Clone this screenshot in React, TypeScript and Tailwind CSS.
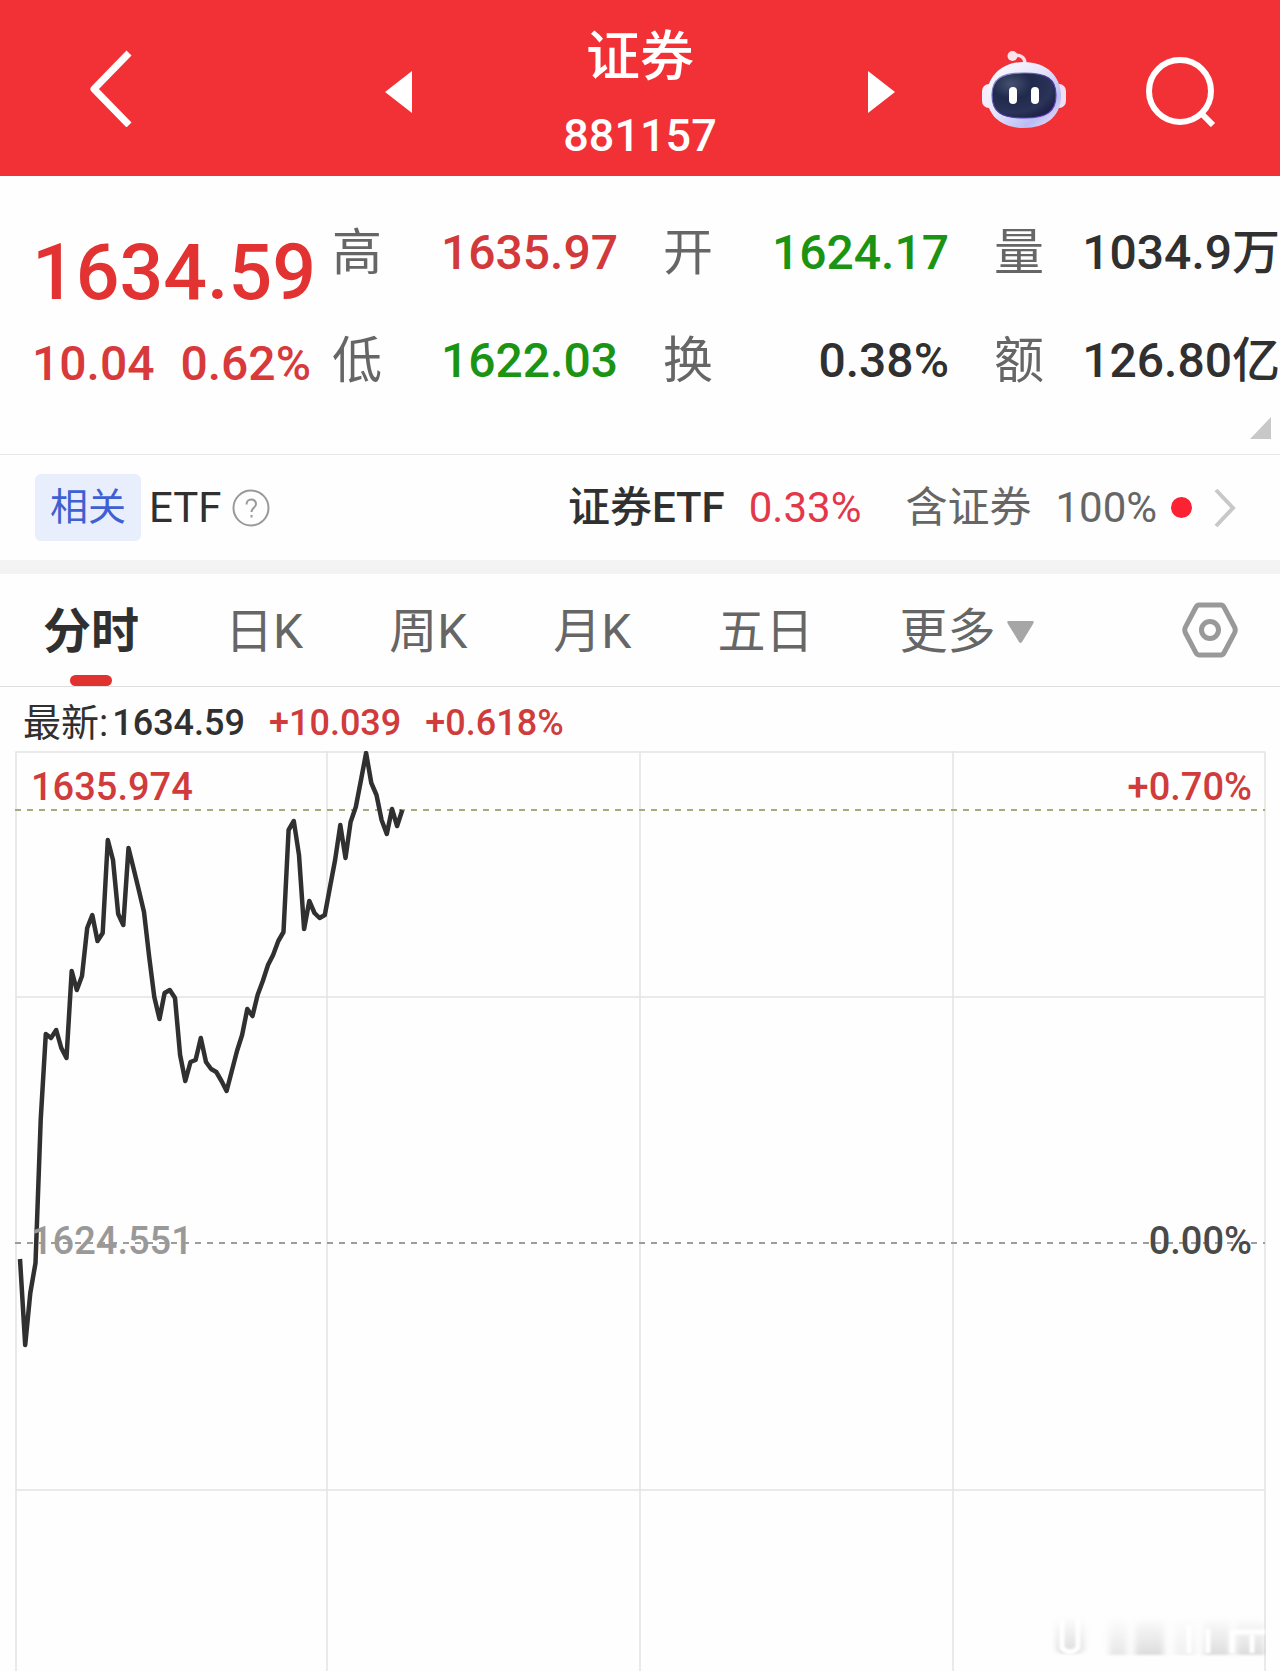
import { useState } from "react";

const stats = [
  { label: "高", value: "1635.97", color: "text-[#d3393a]" },
  { label: "开", value: "1624.17", color: "text-[#1b9413]" },
  { label: "量", value: "1034.9万", color: "text-[#303030]" },
  { label: "低", value: "1622.03", color: "text-[#1b9413]" },
  { label: "换", value: "0.38%", color: "text-[#303030]" },
  { label: "额", value: "126.80亿", color: "text-[#303030]" },
];

const tabs = ["分时", "日K", "周K", "月K", "五日", "更多"];

// one value per minute, measured down from the top of the chart
const series = [
  508, 594, 542, 512, 369, 283, 287, 279, 297, 307, 220, 239, 225, 177, 164,
  190, 182, 89, 109, 163, 174, 97, 118, 139, 161, 206, 246, 268, 242, 239,
  247, 304, 330, 311, 309, 287, 311, 318, 321, 330, 340, 320, 300, 284, 258,
  265, 244, 230, 214, 204, 190, 181, 79, 70, 104, 178, 150, 162, 167, 164,
  136, 109, 74, 107, 71, 56, 29, 2, 32, 44, 69, 83, 58, 75, 59,
];
const STEP = 5.166;
const points = series.map((y, i) => `${(5 + i * STEP).toFixed(1)},${y}`).join(" ");

const RobotIcon = () => (
  <svg viewBox="0 0 84 78" className="h-[78px] w-[84px]" aria-hidden="true">
    <defs>
      <linearGradient id="head" x1="0" y1="0" x2="1" y2="1">
        <stop offset="0" stopColor="#ffffff" />
        <stop offset="0.45" stopColor="#e6e4fb" />
        <stop offset="0.75" stopColor="#b9bdf5" />
        <stop offset="1" stopColor="#f6e6f6" />
      </linearGradient>
      <linearGradient id="rim" x1="0" y1="0" x2="1" y2="1">
        <stop offset="0" stopColor="#9aa0d8" />
        <stop offset="0.5" stopColor="#4a35a0" />
        <stop offset="1" stopColor="#7a3fd0" />
      </linearGradient>
      <radialGradient id="face" cx="0.3" cy="0.25" r="0.8">
        <stop offset="0" stopColor="#46506f" />
        <stop offset="0.4" stopColor="#202a4c" />
        <stop offset="0.8" stopColor="#2b3358" />
        <stop offset="1" stopColor="#1d2248" />
      </radialGradient>
    </defs>
    <path d="M31 5 C38 3 43 6 43 13" fill="none" stroke="#f9dfe8" strokeWidth="3.5" />
    <circle cx="30.5" cy="5" r="5" fill="#fbe3ea" />
    <rect x="0" y="33" width="14" height="24" rx="7" fill="#f4ecfb" />
    <rect x="70" y="33" width="14" height="24" rx="7" fill="#f1dff2" />
    <path d="M42 11 C64 11 79 25 79 45 C79 66 63 77 42 77 C21 77 5 66 5 45 C5 25 20 11 42 11Z" fill="url(#head)" />
    <path d="M42 22 C65 22 74 28 74 44 C74 61 65 67 42 67 C19 67 10 61 10 44 C10 28 19 22 42 22Z" fill="url(#face)" stroke="url(#rim)" strokeWidth="1.2" />
    <rect x="27" y="36" width="8" height="17" rx="4" fill="#fff" />
    <rect x="49" y="36" width="8" height="17" rx="4" fill="#fff" />
  </svg>
);

const Header = () => (
  <header className="grid grid-cols-[1fr_510px_1fr] bg-[#f23137] text-white">
    <div className="flex items-center pl-[88px]">
      <button aria-label="返回">
        <svg viewBox="0 0 44 78" className="h-[78px] w-11" fill="none" stroke="currentColor" strokeWidth="7">
          <path d="M41 4 L6 40 L41 76" strokeLinejoin="round" />
        </svg>
      </button>
    </div>
    <div className="flex items-center justify-between">
      <button aria-label="上一个" className="pt-2">
        <svg viewBox="0 0 27 42" className="h-[42px] w-[27px]" fill="currentColor">
          <path d="M27 0 V42 L0 21Z" />
        </svg>
      </button>
      <div className="flex flex-col items-center gap-3.5 pt-6 pb-2.5">
        <h1 className="text-[54px] leading-[68px] font-medium">证券</h1>
        <p className="text-[45px] leading-[60px] font-medium">881157</p>
      </div>
      <button aria-label="下一个" className="pt-2">
        <svg viewBox="0 0 27 42" className="h-[42px] w-[27px]" fill="currentColor">
          <path d="M0 0 V42 L27 21Z" />
        </svg>
      </button>
    </div>
    <div className="flex items-center justify-end gap-20 pt-[3px] pr-16">
      <button aria-label="智能助手">
        <RobotIcon />
      </button>
      <button aria-label="搜索" className="pt-1">
        <svg viewBox="0 0 70 70" className="size-[70px]" fill="none" stroke="currentColor" strokeWidth="6">
          <circle cx="34" cy="34" r="31" />
          <path d="M55 56 L67 68" />
        </svg>
      </button>
    </div>
  </header>
);

const Quote = () => (
  <section className="border-b border-[#e8e8e8]">
    <div className="flex">
      <div className="w-[332px] shrink-0 pt-[53px] pl-8 font-medium text-[#d8393a]">
        <p className="text-[77px] leading-[88px] text-[#e23232]">1634.59</p>
        <p className="flex gap-[26px] pt-[11px] text-[48px] leading-[72px]">
          <span>10.04</span>
          <span>0.62%</span>
        </p>
      </div>
      <dl className="grid flex-1 grid-cols-3 content-start gap-x-[45px] gap-y-9 pt-[41px] leading-[72px]">
        {stats.map((s) => (
          <div key={s.label} className="flex items-center justify-between whitespace-nowrap">
            <dt className="text-[50px] text-[#666]">{s.label}</dt>
            <dd className={`text-[48px] font-medium ${s.color}`}>{s.value}</dd>
          </div>
        ))}
      </dl>
    </div>
    <div className="flex justify-end pt-[17px] pr-[9px] pb-[15px]">
      <button aria-label="展开">
        <svg viewBox="0 0 21 22" className="h-[22px] w-[21px]" fill="#c8c8c8">
          <path d="M21 0 V22 H0Z" />
        </svg>
      </button>
    </div>
  </section>
);

const EtfBar = () => (
  <section className="flex items-center justify-between border-b-[14px] border-[#f3f3f3] py-[19px] pr-11 pl-[35px] text-[42px] leading-[67px]">
    <div className="flex items-center">
      <span className="rounded-md bg-[#e9eefd] px-[15px] text-[38px] text-[#3f60d2]">相关</span>
      <span className="pl-2 text-[#303030]">ETF</span>
      <button aria-label="说明" className="ml-2.5">
        <svg viewBox="0 0 38 38" className="size-[38px]" fill="none" stroke="#999" strokeWidth="2">
          <circle cx="19" cy="19" r="17.500" />
          <path d="M14.500 15.500 C14.500 9 24 9 24 15 C24 19 19.500 18.500 19.500 23" />
          <path d="M19.500 26 V28.500" />
        </svg>
      </button>
    </div>
    <a href="#" className="flex items-center whitespace-nowrap">
      <span className="font-medium text-[#303030]">证券ETF</span>
      <span className="pl-6 text-[#e3384a]">0.33%</span>
      <span className="pl-11 text-[#666]">含证券</span>
      <span className="pl-6 text-[#666]">100%</span>
      <span className="ml-3.5 size-[21px] rounded-full bg-[#fb2233]" />
      <svg viewBox="0 0 22 40" className="ml-[22px] h-10 w-[22px]" fill="none" stroke="#c8c8c8" strokeWidth="4">
        <path d="M2 2 L19 20 L2 38" />
      </svg>
    </a>
  </section>
);

const Tabs = () => {
  const [active, setActive] = useState("分时");

  return (
    <nav className="flex items-start justify-between border-b border-[#dedede] pr-[42px] pl-[43px]">
      <div className="flex gap-[86px] text-[48px] leading-[72px]">
        {tabs.map((tab) => (
          <button
            key={tab}
            onClick={() => setActive(tab)}
            className={`flex flex-col items-center pt-[22px] ${active === tab ? "font-bold text-[#303030]" : "text-[#666]"}`}
          >
            <span className="flex items-center gap-3">
              {tab}
              {tab === "更多" && (
                <svg viewBox="0 0 27 22" className="h-[22px] w-[27px]" fill="#a6a6a6">
                  <path d="M2 0 H25 Q28 0 26 3 L15 21 Q13.500 23 12 21 L1 3 Q-1 0 2 0Z" />
                </svg>
              )}
            </span>
            <span className={`mt-[7px] h-[11px] w-[42px] rounded-full ${active === tab ? "bg-[#e0322f]" : ""}`} />
          </button>
        ))}
      </div>
      <button aria-label="设置" className="pt-7">
        <svg viewBox="0 0 56 56" className="size-14" fill="none" stroke="#999" strokeWidth="5">
          <path d="M17 3 H39 Q41 3 42.500 6 L52.500 25 Q54 28 52.500 31 L42.500 50 Q41 53 39 53 H17 Q15 53 13.500 50 L3.500 31 Q2 28 3.500 25 L13.500 6 Q15 3 17 3Z" />
          <circle cx="28" cy="28" r="8.500" />
        </svg>
      </button>
    </nav>
  );
};

const Watermark = () => (
  <svg viewBox="0 0 214 44" className="absolute right-0 bottom-3 h-11 w-[214px]" aria-hidden="true">
    <defs>
      <linearGradient id="fade" x1="0" y1="0" x2="0" y2="1">
        <stop offset="0" stopColor="#bbb" stopOpacity="0" />
        <stop offset="1" stopColor="#bbb" stopOpacity="0.5" />
      </linearGradient>
      <filter id="soft" x="-20%" y="-20%" width="140%" height="140%">
        <feGaussianBlur stdDeviation="3 1" />
      </filter>
      <filter id="softer" x="-20%" y="-20%" width="140%" height="140%">
        <feGaussianBlur stdDeviation="1" />
      </filter>
    </defs>
    <g fill="url(#fade)" filter="url(#soft)">
      <rect x="4" y="2" width="28" height="37" rx="8" />
      <rect x="57" y="2" width="18" height="38" opacity="0.7" />
      <rect x="83" y="2" width="29" height="38" />
      <rect x="122" y="2" width="22" height="38" opacity="0.4" />
      <rect x="152" y="2" width="26" height="38" />
      <rect x="184" y="2" width="29" height="38" />
    </g>
    <g fill="none" stroke="#fff" strokeWidth="5" filter="url(#softer)">
      <path d="M10 4 V33 Q18 41 26 33 V4" />
      <path d="M137 10 V38 M156 14 V38 M178 17 H213 M180 16 V38 M200 20 V38" />
    </g>
  </svg>
);

const Chart = () => (
  <section>
    <p className="flex items-center pt-2 pl-[23px] text-[36px] leading-[56px] font-medium text-[#303030]">
      <span className="pr-1 text-[38px] font-normal">最新:</span>
      <span>1634.59</span>
      <span className="pl-6 text-[#d03c3c]">+10.039</span>
      <span className="pl-6 text-[#d03c3c]">+0.618%</span>
    </p>
    <div className="relative mr-[14px] ml-[15px] h-[920px] text-[38px] leading-10 font-medium">
      <svg viewBox="0 0 1251 920" preserveAspectRatio="none" className="block size-full" fill="none">
        <g stroke="#e4e4e4" strokeWidth="1.500">
          <path d="M1 920 V1 H1250 V920" />
          <path d="M312 0 V920 M625 0 V920 M938 0 V920" />
          <path d="M0 246 H1250 M0 739 H1250" />
        </g>
        <path d="M0 59 H1250" stroke="#a9ac79" strokeWidth="2" strokeDasharray="6 6" />
        <path d="M0 492 H1250" stroke="#9c9c9c" strokeWidth="2" strokeDasharray="6 6" />
        <polyline points={points} stroke="#303030" strokeWidth="4.500" strokeLinejoin="round" />
      </svg>
      <span className="absolute top-4 left-4 text-[#d03c3c]">1635.974</span>
      <span className="absolute top-4 right-3.5 text-[#d03c3c]">+0.70%</span>
      <span className="absolute top-[470px] left-4 text-[#999]">1624.551</span>
      <span className="absolute top-[470px] right-3.5 text-[#4a4a4a]">0.00%</span>
      <Watermark />
    </div>
  </section>
);

export default function App() {
  return (
    <main className="bg-[#fefefe] font-[Roboto,'Noto_Sans_CJK_SC',sans-serif]">
      <Header />
      <Quote />
      <EtfBar />
      <Tabs />
      <Chart />
    </main>
  );
}
